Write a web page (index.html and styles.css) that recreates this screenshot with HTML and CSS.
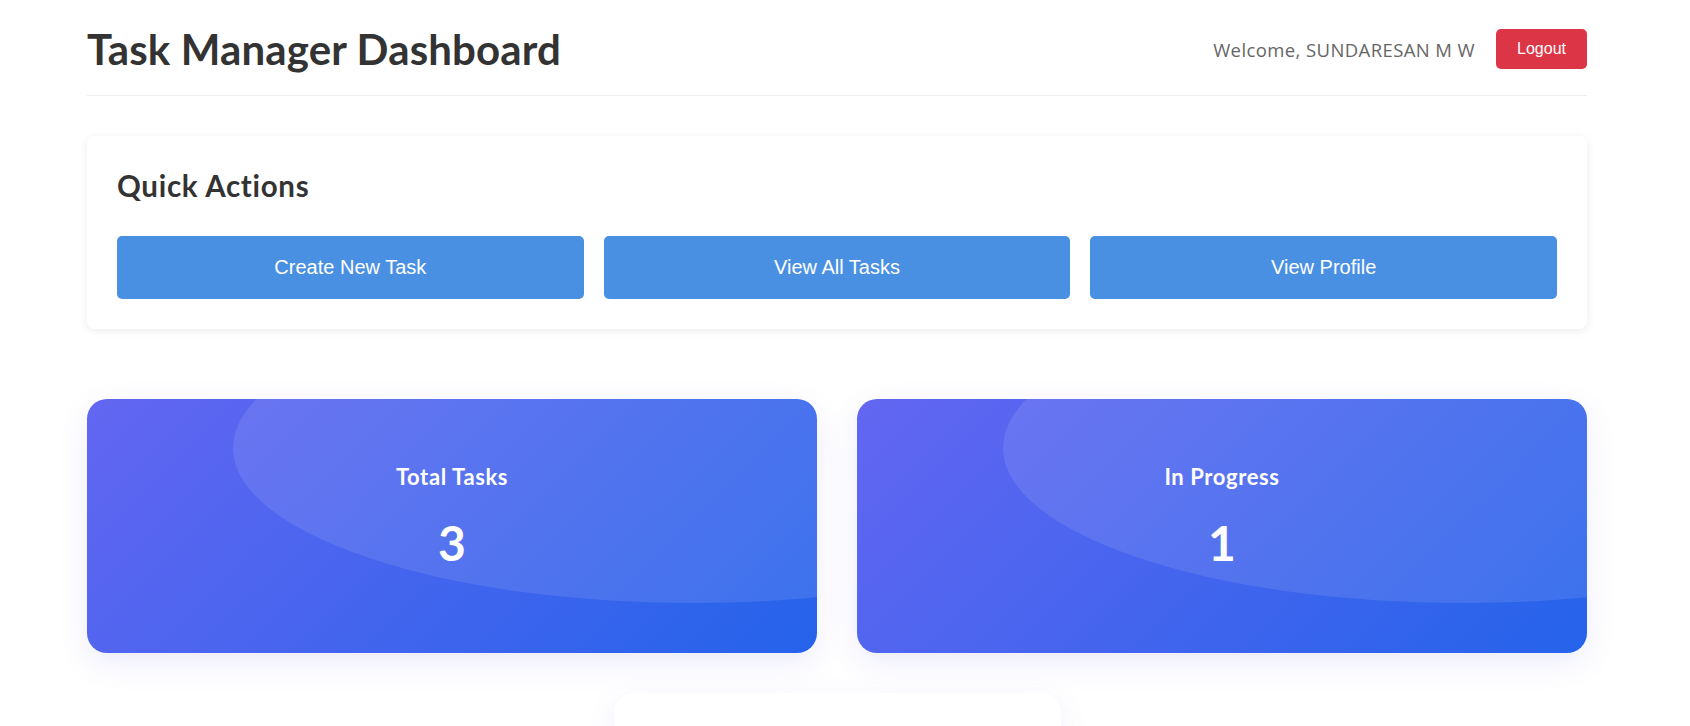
FILE: index.html
```html
<!DOCTYPE html>
<html lang="en">
<head>
<meta charset="utf-8">
<title>Task Manager Dashboard</title>
<link rel="stylesheet" href="styles.css">
</head>
<body>
<div class="container">
  <header class="header">
    <h1 class="title">Task Manager Dashboard</h1>
    <div class="user">
      <span class="welcome">Welcome, SUNDARESAN M W</span>
      <button class="btn-logout">Logout</button>
    </div>
  </header>

  <section class="quick">
    <h2 class="quick-title">Quick Actions</h2>
    <div class="actions">
      <button class="btn-action">Create New Task</button>
      <button class="btn-action">View All Tasks</button>
      <button class="btn-action">View Profile</button>
    </div>
  </section>

  <section class="stats">
    <div class="stat">
      <div class="stat-label">Total Tasks</div>
      <div class="stat-value">3</div>
    </div>
    <div class="stat">
      <div class="stat-label">In Progress</div>
      <div class="stat-value">1</div>
    </div>
    <div class="stat stat-white"></div>
  </section>
</div>
</body>
</html>
```

FILE: styles.css
```css
html {
  scrollbar-width: none;
}
html::-webkit-scrollbar {
  display: none;
}
body {
  margin: 0;
  padding: 0 16px 0 0;
  background: #ffffff;
  color: #333333;
  font-family: "Segoe UI", Lato, "Open Sans", sans-serif;
}
.container {
  max-width: 1500px;
  margin: 0 auto;
}
.header {
  display: flex;
  justify-content: space-between;
  align-items: center;
  padding: 25px 0 22px;
  border-bottom: 1px solid #eeeeee;
  margin-bottom: 40px;
}
.title {
  margin: 0;
  font-size: 42px;
  line-height: 48px;
  font-weight: 700;
  letter-spacing: 0.15px;
  color: #333333;
}
.user {
  display: flex;
  align-items: center;
  gap: 21px;
}
.welcome {
  color: #666666;
  font-family: "Open Sans", Lato, sans-serif;
  font-size: 18.5px;
  letter-spacing: 0.4px;
}
.btn-logout {
  background: #dc3545;
  color: #ffffff;
  border: none;
  border-radius: 5px;
  padding: 11px 21px;
  font: 16px/18px "Liberation Sans", Arial, sans-serif;
}
.quick {
  background: #ffffff;
  border-radius: 8px;
  box-shadow: 0 2px 10px rgba(0, 0, 0, 0.08);
  padding: 30px;
  margin-bottom: 70px;
}
.quick-title {
  margin: 0 0 30px;
  font-size: 29.5px;
  line-height: 40px;
  font-weight: 700;
  letter-spacing: 0.7px;
  color: #333333;
}
.actions {
  display: grid;
  grid-template-columns: repeat(3, 1fr);
  gap: 20px;
}
.btn-action {
  background: #4a90e2;
  color: #ffffff;
  border: none;
  border-radius: 5px;
  padding: 20px;
  font: 20px/23px "Liberation Sans", Arial, sans-serif;
}
.stats {
  display: flex;
  flex-wrap: wrap;
  justify-content: center;
  gap: 40px;
}
.stat {
  flex: 0 0 calc((100% - 40px) / 2);
  height: 254px;
  box-sizing: border-box;
  padding-bottom: 15px;
  border-radius: 20px;
  background: linear-gradient(135deg, #6366f1 0%, #2563eb 100%);
  color: #ffffff;
  position: relative;
  overflow: hidden;
  display: flex;
  flex-direction: column;
  align-items: center;
  justify-content: center;
  box-shadow: 0 10px 30px rgba(99, 102, 241, 0.12);
}
.stat::before {
  content: "";
  position: absolute;
  left: 146px;
  top: -106px;
  width: 920px;
  height: 310px;
  border-radius: 50%;
  background: rgba(255, 255, 255, 0.1);
}
.stat-label {
  position: relative;
  font-size: 22px;
  line-height: 24px;
  font-weight: 700;
  letter-spacing: 0.6px;
  margin-bottom: 25px;
}
.stat-value {
  position: relative;
  font-size: 48px;
  line-height: 58px;
  font-weight: 700;
}
.stat-white {
  flex: 0 0 447px;
  background: #ffffff;
  box-shadow: 0 10px 30px rgba(99, 102, 241, 0.1);
}
```
